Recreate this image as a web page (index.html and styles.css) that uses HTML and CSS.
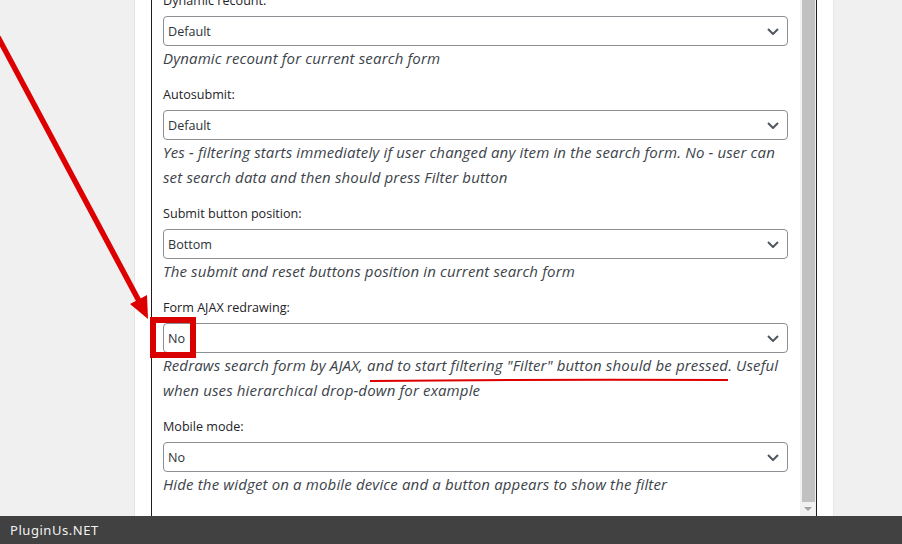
FILE: index.html
```html
<!DOCTYPE html>
<html>
<head>
<meta charset="utf-8">
<link rel="stylesheet" href="styles.css">
</head>
<body>
<div class="page">
  <div class="gutter"></div>
  <div class="panel">
    <div class="frame">
      <div class="content">
        <div class="field">
          <div class="label">Dynamic recount:</div>
          <div class="select"><span>Default</span><svg class="chev" viewBox="0 0 12 7" width="12" height="7"><path d="M1 1l5 5 5-5" fill="none" stroke="#50575e" stroke-width="2"/></svg></div>
          <div class="desc">Dynamic recount for current search form</div>
        </div>
        <div class="field">
          <div class="label">Autosubmit:</div>
          <div class="select"><span>Default</span><svg class="chev" viewBox="0 0 12 7" width="12" height="7"><path d="M1 1l5 5 5-5" fill="none" stroke="#50575e" stroke-width="2"/></svg></div>
          <div class="desc">Yes - filtering starts immediately if user changed any item in the search form. No - user can<br>set search data and then should press Filter button</div>
        </div>
        <div class="field">
          <div class="label">Submit button position:</div>
          <div class="select"><span>Bottom</span><svg class="chev" viewBox="0 0 12 7" width="12" height="7"><path d="M1 1l5 5 5-5" fill="none" stroke="#50575e" stroke-width="2"/></svg></div>
          <div class="desc">The submit and reset buttons position in current search form</div>
        </div>
        <div class="field">
          <div class="label">Form AJAX redrawing:</div>
          <div class="select"><span>No</span><svg class="chev" viewBox="0 0 12 7" width="12" height="7"><path d="M1 1l5 5 5-5" fill="none" stroke="#50575e" stroke-width="2"/></svg></div>
          <div class="desc">Redraws search form by AJAX, and to start filtering "Filter" button should be pressed. Useful<br>when uses hierarchical drop-down for example</div>
        </div>
        <div class="field">
          <div class="label">Mobile mode:</div>
          <div class="select"><span>No</span><svg class="chev" viewBox="0 0 12 7" width="12" height="7"><path d="M1 1l5 5 5-5" fill="none" stroke="#50575e" stroke-width="2"/></svg></div>
          <div class="desc">Hide the widget on a mobile device and a button appears to show the filter</div>
        </div>
      </div>
      <div class="scrollbar">
        <div class="thumb"></div>
        <div class="arrow"></div>
      </div>
    </div>
  </div>
  <div class="gutter-right"></div>
</div>
<div class="bar">PluginUs.NET</div>
<svg class="annot" width="902" height="544" viewBox="0 0 902 544">
  <line x1="-2" y1="37" x2="139" y2="301" stroke="#dd0000" stroke-width="5.5"/>
  <polygon points="148,319 147,295 130,304" fill="#dd0000"/>
  <rect x="153" y="320" width="40" height="35" fill="none" stroke="#d90000" stroke-width="6"/>
  <path d="M370 381 Q550 379 728 380" fill="none" stroke="#dd0000" stroke-width="2"/>
</svg>
</body>
</html>
```

FILE: styles.css
```css
* { box-sizing: border-box; }
html, body { margin: 0; padding: 0; }
body {
  background: #f0f0f0;
  width: 902px;
  height: 544px;
  overflow: hidden;
  position: relative;
  font-family: "Open Sans", "Noto Sans", sans-serif;
}
.page {
  display: flex;
  height: 516px;
}
.gutter { width: 134px; flex: none; }
.gutter-right { flex: 1; }
.panel {
  width: 700px;
  flex: none;
  background: #fff;
  border-left: 1px solid #e4e4e4;
  border-right: 1px solid #e8e8e8;
  padding: 0 16px;
}
.frame {
  height: 516px;
  display: flex;
  border-left: 1px solid #1e1e1e;
  border-right: 1px solid #1e1e1e;
  overflow: hidden;
}
.content {
  flex: 1;
  padding: 0 12px 0 11px;
  margin-top: -9px;
}
.field { margin-bottom: 14px; }
.label {
  font-size: 12.6px;
  line-height: 20px;
  color: #1d2327;
  margin-bottom: 5px;
}
.select {
  height: 30px;
  border: 1px solid #8c8f94;
  border-radius: 4px;
  display: flex;
  align-items: center;
  justify-content: space-between;
  padding: 0 8px 0 4px;
  font-size: 12.6px;
  color: #2c3338;
}
.chev { display: block; }
.desc {
  font-size: 15px;
  letter-spacing: 0.15px;
  font-style: italic;
  line-height: 25px;
  color: #3c434a;
  white-space: nowrap;
}
.scrollbar {
  width: 16px;
  flex: none;
  background: #f1f1f1;
  display: flex;
  flex-direction: column;
  align-items: center;
}
.thumb {
  width: 13px;
  height: 502px;
  margin-left: 1px;
  background: #c1c1c1;
}
.arrow {
  margin-top: 5px;
  width: 0;
  height: 0;
  border-left: 4px solid transparent;
  border-right: 4px solid transparent;
  border-top: 4px solid #a3a3a3;
}
.bar {
  height: 28px;
  background: #414141;
  color: #f2f2f2;
  font-family: "Noto Sans", sans-serif;
  font-size: 13px;
  letter-spacing: 0.55px;
  line-height: 28px;
  padding-left: 10px;
}
.annot {
  position: absolute;
  left: 0;
  top: 0;
  pointer-events: none;
}
```
